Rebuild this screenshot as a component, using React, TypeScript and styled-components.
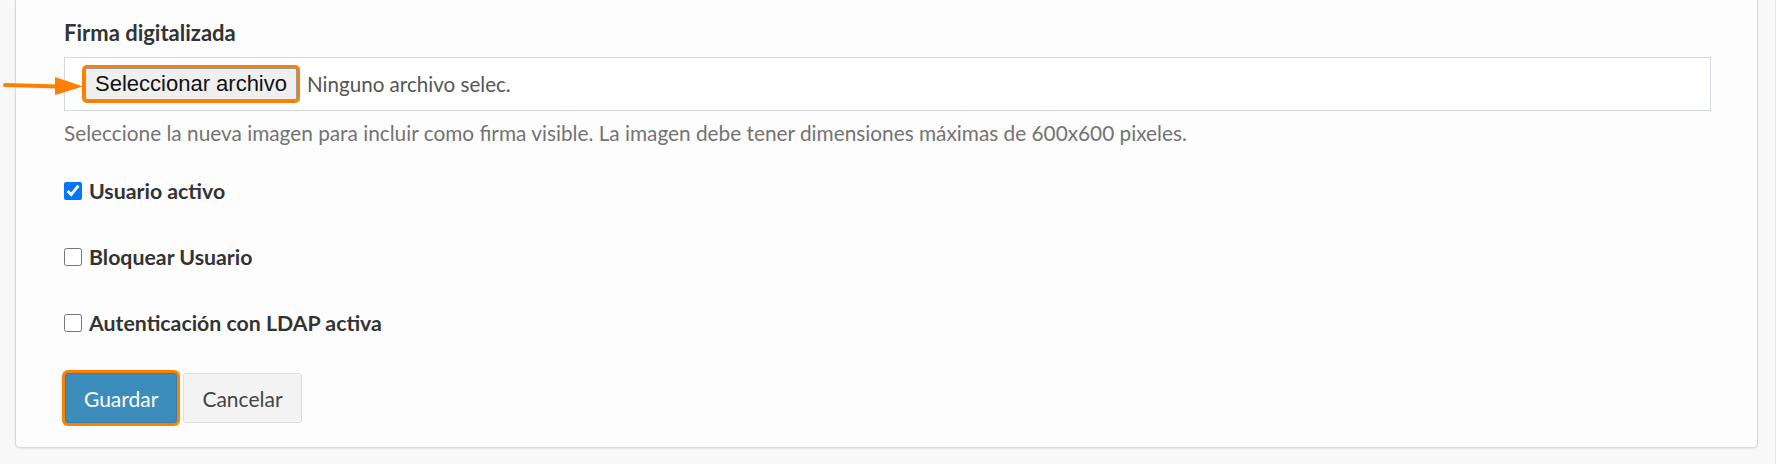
import React from "react";
import styled, { createGlobalStyle } from "styled-components";

const GlobalStyle = createGlobalStyle`
  html, body {
    margin: 0;
    padding: 0;
    background: #f8f8f9;
  }
  body {
    font-family: "Lato", "Liberation Sans", sans-serif;
    color: #333;
  }
  * { box-sizing: border-box; }
`;

const Page = styled.div`
  width: 1776px;
  height: 464px;
  padding: 0 17px 0 15px;
  border-right: 1px solid #e6e6e8;
  overflow: hidden;
`;

const Card = styled.div`
  background: #fdfdfd;
  border: 1px solid #d9d9dc;
  border-top: none;
  border-radius: 0 0 5px 5px;
  box-shadow: 0 1px 2px rgba(0, 0, 0, 0.08);
  padding: 19px 46px 24px 48px;
`;

const FieldLabel = styled.div`
  font-size: 22px;
  line-height: 28px;
  font-weight: 700;
  color: #333;
  margin-bottom: 10px;
`;

const FileBox = styled.div`
  position: relative;
  display: flex;
  align-items: center;
  gap: 10px;
  height: 54px;
  border: 1px solid #d2d6de;
  background: #fff;
  padding-left: 20px;
`;

const FileButton = styled.button`
  height: 32px;
  padding: 0 9px;
  font-family: "Liberation Sans", Arial, sans-serif;
  font-size: 22px;
  color: #111;
  background: #efefef;
  border: 1px solid #9a9a9a;
  border-radius: 2px;
  box-shadow: 0 0 0 3px #ff7f00;
  cursor: pointer;
`;

const FileName = styled.span`
  font-size: 20.6px;
  color: #555;
`;

const Arrow = styled.svg`
  position: absolute;
  left: -62px;
  top: 18px;
`;

const Help = styled.div`
  margin-top: 9px;
  font-size: 20.8px;
  line-height: 26px;
  color: #737373;
`;

const CheckRow = styled.label<{ $top: number }>`
  display: flex;
  align-items: center;
  gap: 7px;
  margin-top: ${(p) => p.$top}px;
  height: 28px;
  font-size: 21.3px;
  font-weight: 700;
  color: #333;
`;

const Check = styled.input`
  width: 18px;
  height: 18px;
  margin: 0;
  accent-color: #0075ff;
`;

const Actions = styled.div`
  display: flex;
  gap: 6px;
  margin-top: 36px;
  padding-left: 1px;
`;

const Btn = styled.button<{ $primary?: boolean; $highlight?: boolean }>`
  height: 50px;
  padding: 0 18px;
  font-family: "Lato", "Liberation Sans", sans-serif;
  font-size: 21px;
  border-radius: 3px;
  cursor: pointer;
  color: ${(p) => (p.$primary ? "#fff" : "#444")};
  background: ${(p) => (p.$primary ? "#3c8dbc" : "#f4f4f4")};
  border: 1px solid ${(p) => (p.$primary ? "#367fa9" : "#ddd")};
  box-shadow: ${(p) => (p.$highlight ? "0 0 0 3px #ff7f00" : "none")};
`;

export default function App() {
  return (
    <>
      <GlobalStyle />
      <Page>
        <Card>
          <FieldLabel>Firma digitalizada</FieldLabel>
          <FileBox>
            <Arrow width="82" height="20" viewBox="0 0 82 20">
              <line x1="2" y1="9" x2="56" y2="10.5" stroke="#ff7f00" strokeWidth="4" strokeLinecap="round" />
              <polygon points="52,1 80,10.5 52,19" fill="#ff7f00" />
            </Arrow>
            <FileButton type="button">Seleccionar archivo</FileButton>
            <FileName>Ninguno archivo selec.</FileName>
          </FileBox>
          <Help>
            Seleccione la nueva imagen para incluir como firma visible. La imagen debe tener dimensiones máximas de 600x600 pixeles.
          </Help>
          <CheckRow $top={31}>
            <Check type="checkbox" defaultChecked />
            Usuario activo
          </CheckRow>
          <CheckRow $top={38}>
            <Check type="checkbox" />
            Bloquear Usuario
          </CheckRow>
          <CheckRow $top={38}>
            <Check type="checkbox" />
            Autenticación con LDAP activa
          </CheckRow>
          <Actions>
            <Btn type="button" $primary $highlight>Guardar</Btn>
            <Btn type="button">Cancelar</Btn>
          </Actions>
        </Card>
      </Page>
    </>
  );
}
